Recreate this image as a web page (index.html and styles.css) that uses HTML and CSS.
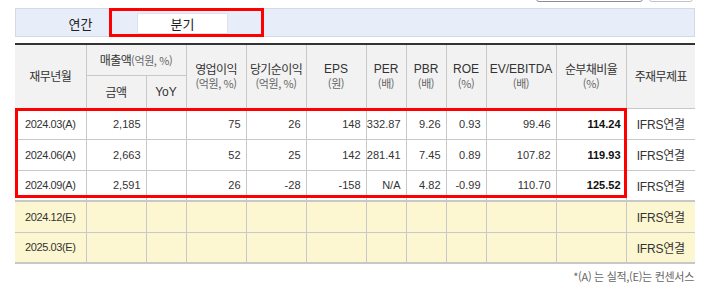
FILE: index.html
```html
<!DOCTYPE html>
<html lang="ko">
<head>
<meta charset="utf-8">
<link rel="stylesheet" href="styles.css">
</head>
<body>
<div class="wrap">
  <div class="toolbar">
    <span class="stub stub-wide"></span>
    <span class="stub stub-small"></span>
  </div>
  <div class="tabbar">
    <div class="tab">연간</div>
    <div class="tab tab-on">분기</div>
    <div class="mark mark-tab"></div>
  </div>
  <div class="tablewrap">
    <table class="grid">
      <colgroup>
        <col style="width:71px"><col style="width:60px"><col style="width:40px"><col style="width:60px">
        <col style="width:60px"><col style="width:60px"><col style="width:40px"><col style="width:40px">
        <col style="width:40px"><col style="width:70px"><col style="width:70px"><col style="width:69px">
      </colgroup>
      <thead>
        <tr class="h1">
          <th rowspan="2">재무년월</th>
          <th colspan="2">매출액<span class="sub-in">(억원, %)</span></th>
          <th rowspan="2">영업이익<span class="sub">(억원, %)</span></th>
          <th rowspan="2">당기순이익<span class="sub">(억원, %)</span></th>
          <th rowspan="2" class="en">EPS<span class="sub">(원)</span></th>
          <th rowspan="2" class="en">PER<span class="sub">(배)</span></th>
          <th rowspan="2" class="en">PBR<span class="sub">(배)</span></th>
          <th rowspan="2" class="en">ROE<span class="sub">(%)</span></th>
          <th rowspan="2" class="en">EV/EBITDA<span class="sub">(배)</span></th>
          <th rowspan="2">순부채비율<span class="sub">(%)</span></th>
          <th rowspan="2">주재무제표</th>
        </tr>
        <tr class="h2">
          <th>금액</th>
          <th class="en">YoY</th>
        </tr>
      </thead>
      <tbody>
        <tr>
          <td class="date">2024.03(A)</td><td>2,185</td><td></td><td>75</td><td>26</td><td>148</td>
          <td>332.87</td><td>9.26</td><td>0.93</td><td>99.46</td><td class="strong">114.24</td><td class="std">IFRS연결</td>
        </tr>
        <tr>
          <td class="date">2024.06(A)</td><td>2,663</td><td></td><td>52</td><td>25</td><td>142</td>
          <td>281.41</td><td>7.45</td><td>0.89</td><td>107.82</td><td class="strong">119.93</td><td class="std">IFRS연결</td>
        </tr>
        <tr>
          <td class="date">2024.09(A)</td><td>2,591</td><td></td><td>26</td><td>-28</td><td>-158</td>
          <td>N/A</td><td>4.82</td><td>-0.99</td><td>110.70</td><td class="strong">125.52</td><td class="std">IFRS연결</td>
        </tr>
        <tr class="est est-first">
          <td class="date">2024.12(E)</td><td></td><td></td><td></td><td></td><td></td>
          <td></td><td></td><td></td><td></td><td></td><td class="std">IFRS연결</td>
        </tr>
        <tr class="est">
          <td class="date">2025.03(E)</td><td></td><td></td><td></td><td></td><td></td>
          <td></td><td></td><td></td><td></td><td></td><td class="std">IFRS연결</td>
        </tr>
      </tbody>
    </table>
    <div class="mark mark-rows"></div>
  </div>
  <p class="note">*(A) 는 실적,(E)는 컨센서스</p>
</div>
</body>
</html>
```

FILE: styles.css
```css
* { box-sizing: border-box; }
html, body { margin: 0; padding: 0; background: #fff; }
body {
  font-family: "Liberation Sans", "Noto Sans CJK KR", sans-serif;
  color: #333;
}
.wrap {
  width: 680px;
  margin-left: 15px;
}
.toolbar {
  height: 8px;
  display: flex;
  justify-content: flex-end;
  gap: 6px;
  padding-right: 2px;
  overflow: hidden;
}
.stub {
  display: block;
  height: 22px;
  margin-top: -20px;
  border: 1px solid #9a9a9a;
  border-radius: 3px;
  background: #fff;
}
.stub-wide { width: 107px; border-color: #8e8e8e; }
.stub-small { width: 44px; border-color: #c4c4c4; }

.tabbar {
  position: relative;
  height: 29px;
  background: #e8eef9;
  border: 1px solid #d3dae6;
  display: flex;
  align-items: flex-start;
  gap: 11px;
  padding: 4px 0 0 19px;
}
.tab {
  width: 91px;
  height: 21px;
  font-family: "Noto Sans CJK KR", sans-serif;
  font-size: 13px;
  line-height: 20px;
  text-align: center;
  color: #222;
  border: 1px solid transparent;
}
.tab-on {
  background: #fff;
  border-color: #dde2ea;
}
.mark {
  position: absolute;
  border: 3px solid #f00;
  pointer-events: none;
}
.mark-tab {
  left: 93px;
  top: -1px;
  width: 155px;
  height: 29px;
}

.tablewrap {
  position: relative;
  margin-top: 6px;
}
.grid {
  width: 680px;
  table-layout: fixed;
  border-collapse: collapse;
  border-top: 2px solid #333;
  border-bottom: 2px solid #c8c8c8;
}
.grid th, .grid td {
  border: 1px solid #c8c8c8;
  padding: 0;
}
.grid tr > :first-child { border-left: 0; }
.grid tr > :last-child { border-right: 0; }
.grid th {
  background: #f2f2f2;
  font-family: "Noto Sans CJK KR", sans-serif;
  font-weight: normal;
  font-size: 12px;
  letter-spacing: -0.6px;
  color: #333;
  line-height: 14px;
  text-align: center;
}
.grid th.en {
  font-family: "Liberation Sans", "Noto Sans CJK KR", sans-serif;
  letter-spacing: 0;
}
.grid .h1 th { height: 31px; }
.grid .h2 th { height: 33px; }
.sub, .sub-in {
  font-family: "Noto Sans CJK KR", sans-serif;
  font-size: 11px;
  color: #666;
  letter-spacing: -0.4px;
}
.sub { display: block; }
.grid td {
  height: 31px;
  font-size: 11px;
  color: #333;
  text-align: right;
  padding-right: 5px;
}
.grid td.date, .grid td.std {
  text-align: center;
  padding-right: 0;
  font-family: "Liberation Sans", "Noto Sans CJK KR", sans-serif;
  letter-spacing: -0.4px;
}
.grid td.std { font-size: 12px; letter-spacing: -0.2px; }
.grid td.strong { font-weight: bold; color: #111; }
.grid .est td { background: #fdf7d1; }
.grid .est-first td { border-top: 2px solid #c8c8c8; }

.mark-rows {
  left: 0;
  top: 65px;
  width: 612px;
  height: 90px;
}
.note {
  margin: 5px 1px 0 0;
  text-align: right;
  font-family: "Noto Sans CJK KR", sans-serif;
  font-size: 11px;
  color: #666;
  letter-spacing: -0.3px;
  line-height: 14px;
}
```
